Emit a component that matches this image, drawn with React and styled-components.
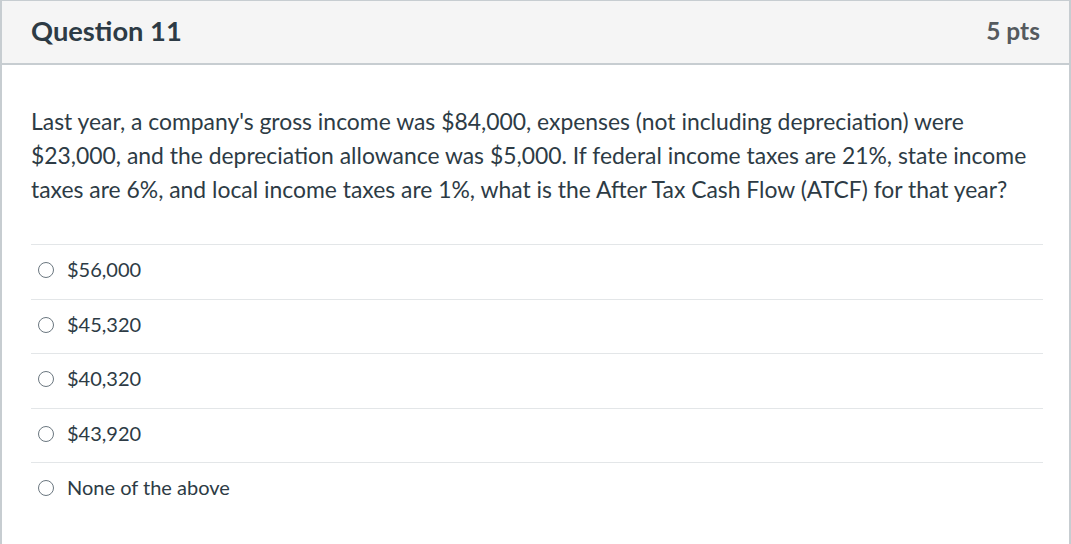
import React from "react";
import styled, { createGlobalStyle } from "styled-components";

const GlobalStyle = createGlobalStyle`
  html, body {
    margin: 0;
    padding: 0;
    background: #fff;
  }
  body {
    font-family: Lato, "Open Sans", sans-serif;
    color: #2d3b45;
  }
`;

const Card = styled.div`
  width: 1071px;
  height: 544px;
  box-sizing: border-box;
  border-left: 2px solid #c7cdd1;
  border-right: 2px solid #c7cdd1;
  border-top: 1px solid #c7cdd1;
  overflow: hidden;
  background: #fff;
`;

const Header = styled.div`
  height: 64px;
  box-sizing: border-box;
  display: flex;
  align-items: center;
  justify-content: space-between;
  padding: 0 29px 4px 29px;
  background: #f5f5f5;
  border-bottom: 2px solid #c7cdd1;
`;

const Title = styled.h2`
  margin: 0;
  font-size: 27.3px;
  font-weight: 700;
  color: #2d3b45;
`;

const Points = styled.span`
  font-size: 24.5px;
  font-weight: 700;
  color: #555a5e;
`;

const Body = styled.div`
  padding: 39px 26px 0 29px;
`;

const Prompt = styled.p`
  margin: 0 0 38px;
  font-size: 22.9px;
  line-height: 34px;
  color: #2d3b45;
`;

const Answers = styled.div`
  display: flex;
  flex-direction: column;
`;

const Answer = styled.label`
  display: flex;
  align-items: center;
  gap: 13px;
  height: 54.5px;
  box-sizing: border-box;
  border-top: 1px solid #e3e6e8;
  padding: 0 0 5px 7px;
  font-size: 20px;
  color: #2d3b45;
`;

const Radio = styled.span`
  width: 14px;
  height: 14px;
  margin-top: 2px;
  border: 1.5px solid #6b7780;
  border-radius: 50%;
  flex-shrink: 0;
`;

const answers = ["$56,000", "$45,320", "$40,320", "$43,920", "None of the above"];

export default function App() {
  return (
    <>
      <GlobalStyle />
      <Card>
        <Header>
          <Title>Question 11</Title>
          <Points>5 pts</Points>
        </Header>
        <Body>
          <Prompt>
            Last year, a company's gross income was $84,000, expenses (not including depreciation) were
            $23,000, and the depreciation allowance was $5,000. If federal income taxes are 21%, state income
            taxes are 6%, and local income taxes are 1%, what is the After Tax Cash Flow (ATCF) for that year?
          </Prompt>
          <Answers>
            {answers.map((a) => (
              <Answer key={a}>
                <Radio />
                {a}
              </Answer>
            ))}
          </Answers>
        </Body>
      </Card>
    </>
  );
}
